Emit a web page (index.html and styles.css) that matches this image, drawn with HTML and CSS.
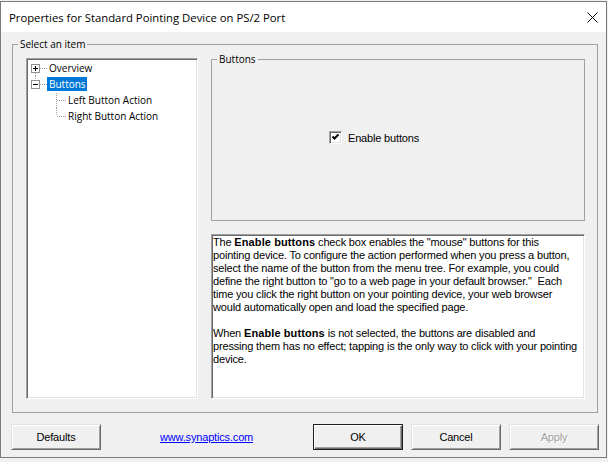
FILE: index.html
```html
<!DOCTYPE html>
<html lang="en">
<head>
  <meta charset="UTF-8">
  <title>Properties for Standard Pointing Device on PS/2 Port</title>
  <link rel="stylesheet" href="styles.css">
</head>
<body>
  <div class="dialog">
    <div class="titlebar">
      <span class="title">Properties for Standard Pointing Device on PS/2 Port</span>
      <svg class="close" width="11" height="11" viewBox="0 0 11 11">
        <path d="M0.5 0.5 L10.5 10.5 M10.5 0.5 L0.5 10.5" stroke="#000" stroke-width="1" fill="none"/>
      </svg>
    </div>

    <div class="content">
      <fieldset class="group group-main">
        <legend>Select an item</legend>
        <div class="group-body">
          <div class="tree">
            <div class="tree-row">
              <svg class="tree-lines" width="19" height="16" viewBox="0 0 19 16">
                <rect x="3.5" y="4.5" width="8" height="8" fill="#fff" stroke="#919191"/>
                <path d="M5 8.5 H10 M7.5 6 V11" stroke="#000"/>
                <path d="M12 8.5 H19 M7.5 13 V16" stroke="#a0a0a0" stroke-dasharray="1 1"/>
              </svg>
              <span class="tree-label">Overview</span>
            </div>
            <div class="tree-row">
              <svg class="tree-lines" width="19" height="16" viewBox="0 0 19 16">
                <path d="M7.5 0 V4" stroke="#a0a0a0" stroke-dasharray="1 1"/>
                <rect x="3.5" y="4.5" width="8" height="8" fill="#fff" stroke="#919191"/>
                <path d="M5 8.5 H10" stroke="#000"/>
                <path d="M12 8.5 H19" stroke="#a0a0a0" stroke-dasharray="1 1"/>
              </svg>
              <span class="tree-label selected">Buttons</span>
            </div>
            <div class="tree-row">
              <svg class="tree-lines" width="38" height="16" viewBox="0 0 38 16">
                <path d="M28.5 1 V16 M29 8.5 H38" stroke="#a0a0a0" stroke-dasharray="1 1"/>
              </svg>
              <span class="tree-label">Left Button Action</span>
            </div>
            <div class="tree-row">
              <svg class="tree-lines" width="38" height="16" viewBox="0 0 38 16">
                <path d="M28.5 0 V8 M29 8.5 H38" stroke="#a0a0a0" stroke-dasharray="1 1"/>
              </svg>
              <span class="tree-label">Right Button Action</span>
            </div>
          </div>

          <div class="side">
            <fieldset class="group group-buttons">
              <legend>Buttons</legend>
              <div class="check-row">
                <span class="checkbox">
                  <svg width="9" height="9" viewBox="0 0 9 9">
                    <path d="M1.5 3.5 L3.5 5.5 L7.5 1.5" stroke="#000" stroke-width="2" fill="none"/>
                  </svg>
                </span>
                <span class="check-label">Enable buttons</span>
              </div>
            </fieldset>

            <div class="help">
              The <b>Enable buttons</b> check box enables the "mouse" buttons for this<br>
              pointing device. To configure the action performed when you press a button,<br>
              select the name of the button from the menu tree. For example, you could<br>
              define the right button to "go to a web page in your default browser."&nbsp; Each<br>
              time you click the right button on your pointing device, your web browser<br>
              would automatically open and load the specified page.<br>
              <br>
              When <b>Enable buttons</b> is not selected, the buttons are disabled and<br>
              pressing them has no effect; tapping is the only way to click with your pointing<br>
              device.
            </div>
          </div>
        </div>
      </fieldset>

      <div class="button-row">
        <button class="btn btn-defaults">Defaults</button>
        <a class="link" href="#">www.synaptics.com</a>
        <button class="btn btn-ok">OK</button>
        <button class="btn btn-cancel">Cancel</button>
        <button class="btn btn-apply" disabled>Apply</button>
      </div>
    </div>
  </div>
</body>
</html>
```

FILE: styles.css
```css
* {
  box-sizing: border-box;
}

body {
  margin: 0;
  background-color: #f0f0f0;
  font-family: "Liberation Sans", Arial, sans-serif;
  font-size: 11px;
  letter-spacing: -0.17px;
  color: #000;
}

.dialog {
  width: 607px;
  height: 457px;
  margin-top: 1px;
  border: 1px solid #7a7a7a;
  background-color: #f0f0f0;
  display: flex;
  flex-direction: column;
}

.titlebar {
  height: 30px;
  flex-shrink: 0;
  background-color: #fff;
  display: flex;
  align-items: center;
  padding: 0 8px;
}

.title {
  flex: 1;
  font-family: "Open Sans", "Noto Sans", sans-serif;
  font-size: 11.3px;
  letter-spacing: 0;
}

.content {
  padding: 4px 8px 0 11px;
}

/* group boxes */
.group {
  margin: 0;
  padding: 0;
  min-width: 0;
  border: 1px solid #a0a0a0;
}

.group legend {
  margin-left: 5px;
  padding: 0 2px;
  font-family: "Open Sans", "Noto Sans", sans-serif;
  font-size: 10px;
  line-height: 16px;
  letter-spacing: 0;
}

.group-body {
  display: flex;
  gap: 13px;
  padding: 0 12px 13px 13px;
}

/* tree */
.tree {
  width: 172px;
  height: 341px;
  margin-top: 6px;
  padding: 1px 0 0 1px;
  background-color: #fff;
  border: 1px solid;
  border-color: #a0a0a0 #fff #fff #a0a0a0;
  box-shadow: inset 1px 1px #696969, inset -1px -1px #e3e3e3;
}

.tree-row {
  height: 16px;
  display: flex;
  align-items: center;
}

.tree-lines {
  flex-shrink: 0;
  display: block;
}

.tree-label {
  padding: 0 1px 0 2px;
  font-family: "Open Sans", "Noto Sans", sans-serif;
  font-size: 10px;
  line-height: 14px;
  letter-spacing: 0;
  white-space: nowrap;
}

.tree-label.selected {
  background-color: #0078d7;
  color: #fff;
}

/* right side */
.side {
  width: 374px;
  display: flex;
  flex-direction: column;
}

.group-buttons {
  height: 169px;
}

.group-buttons legend {
  line-height: 14px;
}

.check-row {
  display: flex;
  align-items: center;
  margin-top: 65px;
  padding-left: 117px;
}

.checkbox {
  width: 13px;
  height: 13px;
  padding: 1px;
  background-color: #fff;
  border: 1px solid;
  border-color: #a0a0a0 #fff #fff #a0a0a0;
  box-shadow: inset 1px 1px #696969, inset -1px -1px #e3e3e3;
  display: flex;
}

.checkbox svg {
  display: block;
}

.check-label {
  margin-left: 6px;
}

.help {
  height: 165px;
  margin-top: 13px;
  padding: 1px 0 0 1px;
  background-color: #fff;
  border: 1px solid;
  border-color: #a0a0a0 #fff #fff #a0a0a0;
  box-shadow: inset 1px 1px #696969, inset -1px -1px #e3e3e3;
  line-height: 13px;
  white-space: nowrap;
}

.help b {
  letter-spacing: 0.1px;
}

/* bottom buttons */
.button-row {
  display: flex;
  align-items: center;
  height: 26px;
  margin-top: 11px;
}

.btn {
  width: 90px;
  height: 26px;
  padding: 0;
  font: inherit;
  letter-spacing: inherit;
  color: #000;
  background-color: #f0f0f0;
  border: 1px solid;
  border-color: #e3e3e3 #696969 #696969 #e3e3e3;
  box-shadow: inset 1px 1px #fff, inset -1px -1px #a0a0a0;
}

.btn-defaults {
  margin-left: -1px;
}

.link {
  margin-left: 59px;
  color: #0000ff;
  text-decoration: underline;
}

.btn-ok {
  margin-left: auto;
  border-color: #1e1e1e;
  box-shadow: inset 1px 1px #fff, inset -1px -1px #696969, inset -2px -2px #a0a0a0;
}

.btn-cancel,
.btn-apply {
  margin-left: 8px;
}

.btn-apply {
  margin-right: -1px;
  color: #a0a0a0;
  text-shadow: 1px 1px #fff;
}
```
